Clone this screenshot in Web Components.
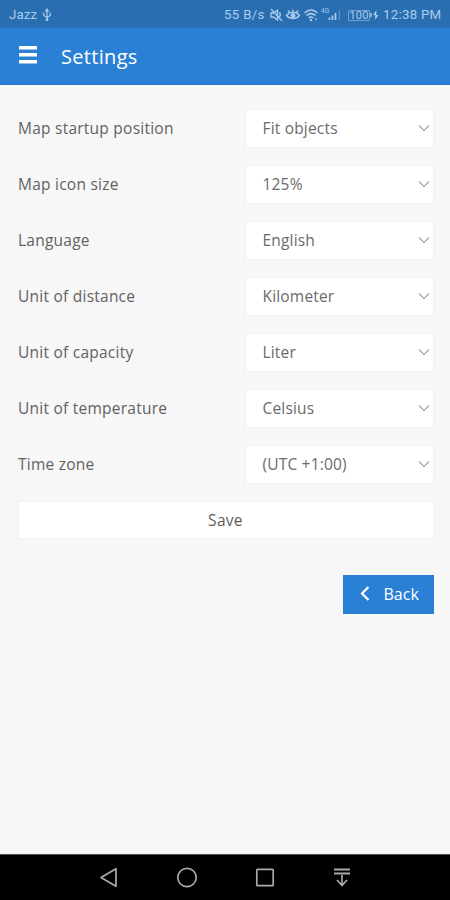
<!DOCTYPE html>
<html lang="en"><head><meta charset="utf-8"><title>Settings</title>
<style>
html,body{margin:0;height:100%}
body{background:#f7f7f7;font-family:"Open Sans","Noto Sans",sans-serif;overflow:hidden}
</style></head><body>
<settings-app></settings-app>
<script>
const define = (name, html) => customElements.define(name, class extends HTMLElement {
  constructor() {
    super();
    this.attachShadow({mode: 'open'}).innerHTML = html;
  }
});

define('status-bar', `<style>
:host{display:flex;align-items:center;height:28px;box-sizing:border-box;padding:2px 9px 0 9px;background:#296eb0;color:#a9cdee;font:13.300px/26px Roboto,sans-serif}
svg{display:block;flex:none;fill:none;stroke:currentColor}
.sp{flex:1}
.carrier{width:33px;letter-spacing:.1px}
.rate{width:45px;letter-spacing:.3px;white-space:nowrap}
.time{width:58px;letter-spacing:.25px;white-space:nowrap}
.cell{display:flex;align-items:center;width:21px;height:26px}
.g{font-size:6.500px;line-height:8px;align-self:flex-start;margin-top:5px}
.bat{font-size:11px;line-height:10px;border:1px solid #70a2d0;border-radius:1px;width:20px;text-align:center;height:9px;letter-spacing:.2px}
</style>
<span class="carrier">Jazz</span>
<svg width="10" height="14" viewBox="0 0 10 14"><path d="M5 2v10M1.800 4.500v3L5 9.500l3.200-2V4.500" stroke-width="1.200"/><path d="M5 0l2.300 3.500H2.700z" fill="currentColor" stroke="none"/><circle cx="5" cy="11.800" r="1.400" fill="currentColor" stroke="none"/></svg>
<span class="sp"></span>
<span class="rate">55 B/s</span>
<svg width="15" height="14" viewBox="0 0 15 14"><path d="M2 5h2.500L8.500 2v10l-4-3H2zM2 1l11 12M10.500 4c1 1.500 1 3.500 0 5" stroke-width="1.300"/></svg>
<svg style="margin-left:1px" width="16" height="14" viewBox="0 0 16 14"><path d="M1.500 7.500c3.500-4.500 9.500-4.500 13 0c-3.500 4-9.500 4-13 0zM8 4V1.500M4.500 4.500L3 2.500M11.500 4.500L13 2.500" stroke-width="1.300"/><circle cx="8" cy="7.500" r="2" fill="currentColor"/></svg>
<svg style="margin-left:2px" width="16" height="14" viewBox="0 0 16 14"><path d="M1.500 5c4-4 9-4 13 0M3.500 7.500c3-2.500 6-2.500 9 0M5.700 10c1.500-1.200 3.100-1.200 4.600 0" stroke-width="1.500"/><circle cx="8" cy="12" r="1.200" fill="currentColor" stroke="none"/><path d="M13 10v2.500"/></svg>
<span class="cell" style="margin-left:2px"><span class="g">4G</span><svg width="14" height="12" viewBox="0 0 14 12" style="margin-left:-1px"><path d="M1.500 8.500V11M4.500 6.500V11M7.500 4V11" stroke-width="1.700"/><path d="M11.500 1v10" stroke-width="1.200" opacity=".4"/></svg></span>
<span class="bat" style="margin-left:6px">100</span>
<svg width="10" height="12" viewBox="0 0 10 12"><path d="M1 4v4" stroke-width="1.500"/><path d="M6.500 1L3 6h2.300L5 11l3.500-5H6.200z" fill="currentColor" stroke="none"/></svg>
<span class="time" style="margin-left:3px">12:38 PM</span>`);

define('app-header', `<style>
:host{display:flex;align-items:center;height:57px;box-sizing:border-box;padding:0 0 0 19px;background:#2980d5;border-bottom:1px solid #2375c7;color:#fff}
svg{display:block;margin-bottom:3px}
h1{font-size:20px;font-weight:400;line-height:28px;margin:2px 0 0 24px;letter-spacing:.32px}
</style>
<svg width="18" height="18" viewBox="0 0 18 18" fill="#fff"><rect y="0" width="18" height="3.500" rx=".5"/><rect y="7" width="18" height="3.500" rx=".5"/><rect y="14" width="18" height="3.500" rx=".5"/></svg>
<h1><slot></slot></h1>`);

define('select-box', `<style>
:host{display:flex;align-items:center;justify-content:space-between;width:189px;height:39px;box-sizing:border-box;padding:0 3px 1px 16.500px;background:#fff;border:1px solid #f2f2f2;color:#6b6b6b;font-size:15.500px;letter-spacing:.18px}
svg{display:block}
</style><span><slot></slot></span>
<svg width="12" height="8" viewBox="0 0 12 8" fill="none" stroke="#a8a8a8" stroke-width="1.200"><path d="M1 1.500l5 5 5-5"/></svg>`);

define('setting-row', `<style>
:host{display:flex;align-items:center;justify-content:space-between;height:39px;color:#626262;font-size:15.500px;letter-spacing:.24px}
.l{padding-bottom:1px}
</style><span class="l"><slot name="label"></slot></span><select-box><slot></slot></select-box>`);

define('save-button', `<style>
:host{display:flex;align-items:center;justify-content:center;height:38px;box-sizing:border-box;padding:0 1px 1px 0;background:#fff;border:1px solid #f3f3f3;color:#5c5c5c;font-size:15.500px;letter-spacing:.3px}
</style><slot></slot>`);

define('back-button', `<style>
:host{display:flex;align-items:center;align-self:flex-end;width:91px;height:39px;box-sizing:border-box;padding:0 0 1px 17px;background:#2980d5;color:#fff;font-size:16px}
svg{display:block;margin-right:13.500px}
</style><svg width="10" height="15" viewBox="0 0 10 15" fill="none" stroke="#fff" stroke-width="2.200"><path d="M8.500 1L2 7.500 8.500 14"/></svg><span><slot></slot></span>`);

define('nav-bar', `<style>
:host{display:flex;align-items:center;justify-content:space-between;height:46px;box-sizing:border-box;padding:0 99px 0 98px;background:#000;border-top:1px solid #555}
svg{display:block;fill:none;stroke:#aaa;stroke-width:1.700}
</style>
<svg width="20" height="22" viewBox="0 0 20 22"><path d="M3 10.500L18 1.700v17.600z" stroke-linejoin="round"/></svg>
<svg width="22" height="22" viewBox="0 0 22 22"><circle cx="11" cy="10.500" r="9.200"/></svg>
<svg width="20" height="22" viewBox="0 0 20 22"><rect x="1.800" y="2.300" width="16.400" height="16.400" rx=".8"/></svg>
<svg width="18" height="22" viewBox="0 0 18 22"><path d="M1 2.500h16M1 6.500h16" stroke-width="2"/><path d="M9 8v10.500M4 13l5 5.500 5-5.500"/></svg>`);

define('settings-app', `<style>
:host{display:flex;flex-direction:column;height:100vh;background:#f7f7f7}
main{flex:1;display:flex;flex-direction:column;padding:23.500px 16px 0 18px}
.rows{display:flex;flex-direction:column;gap:17.100px}
save-button{margin-top:17px}
back-button{margin-top:35.500px}
</style>
<status-bar></status-bar><app-header>Settings</app-header>
<main><div class="rows">${[['Map startup position','Fit objects'],['Map icon size','125%'],['Language','English'],['Unit of distance','Kilometer'],['Unit of capacity','Liter'],['Unit of temperature','Celsius'],['Time zone','(UTC +1:00)']].map(([l,v]) => `<setting-row><span slot="label">${l}</span>${v}</setting-row>`).join('')}</div>
<save-button>Save</save-button><back-button>Back</back-button></main>
<nav-bar></nav-bar>`);
</script></body></html>
